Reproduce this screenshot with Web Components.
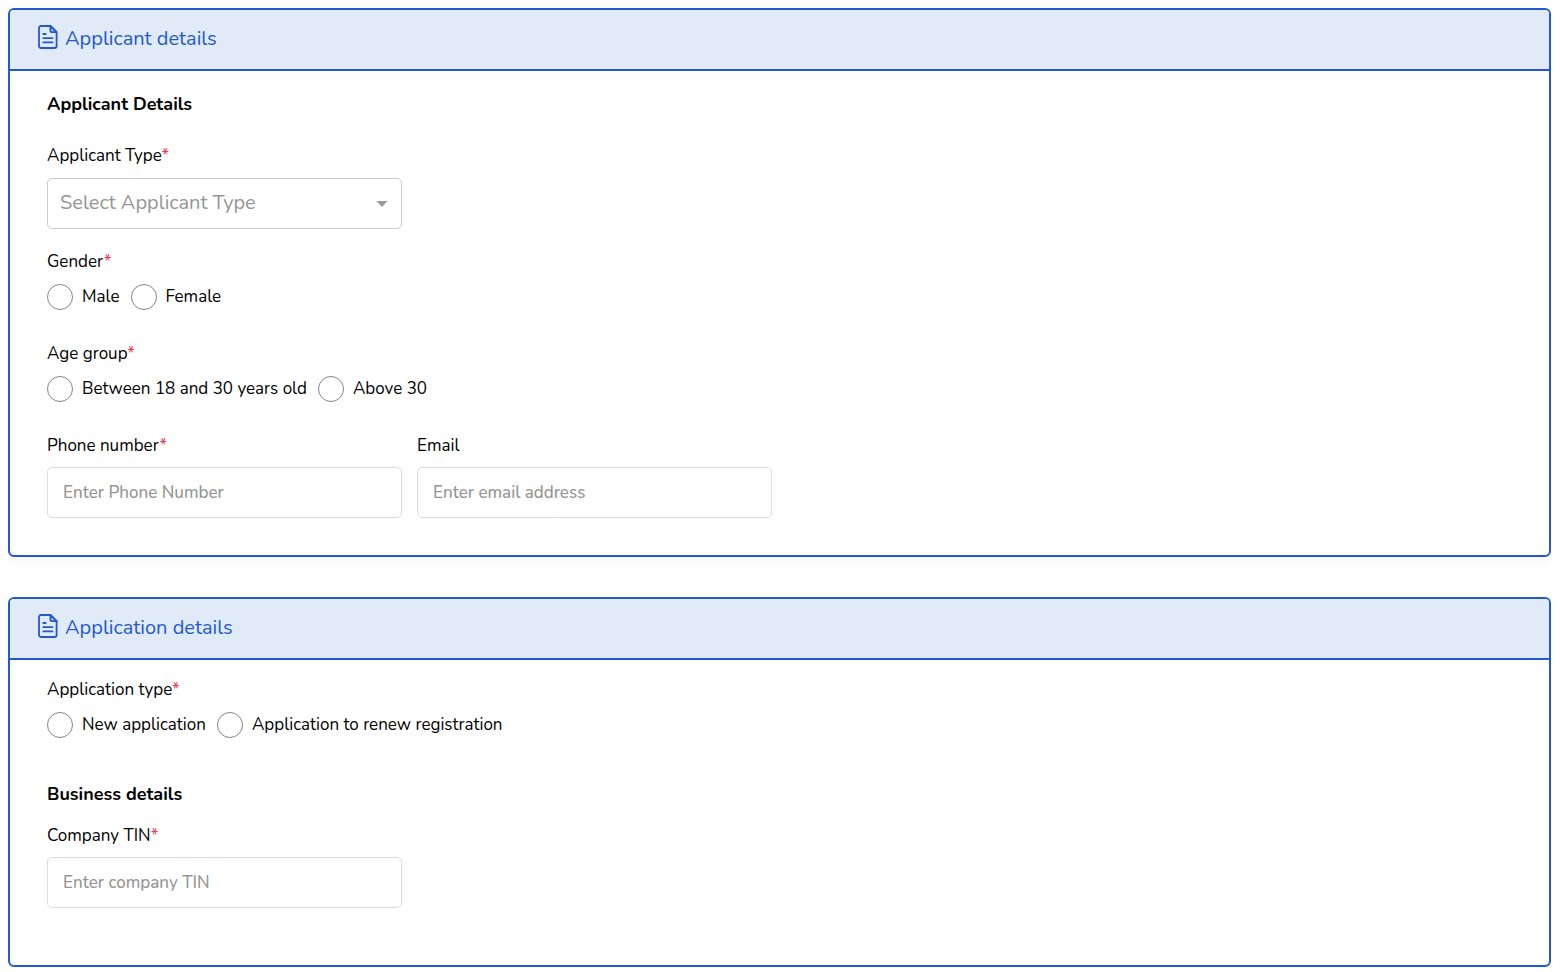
<!DOCTYPE html>
<html lang="en">
<head>
<meta charset="utf-8">
<meta name="viewport" content="width=device-width, initial-scale=1">
<title>Registration application</title>
<style>
  body {
    margin: 8px 9px 0 8px;
    background: #fff;
    color: #000;
    font: 17px/24px Nunito, Lato, sans-serif;
    --brand: #2459cd;
    --brand-soft: #e1ebf7;
    --muted: #959595;
  }
</style>
</head>
<body>
<application-form></application-form>

<script>
const define = (name, html, setup) => {
  const template = document.createElement('template');
  template.innerHTML = html;
  customElements.define(name, class extends HTMLElement {
    constructor() {
      super();
      this.attachShadow({ mode: 'open' }).append(template.content.cloneNode(true));
    }
    connectedCallback() {
      if (setup && !this.ready) setup(this, this.shadowRoot);
      this.ready = true;
    }
  });
};

const star = host => host.hasAttribute('required') ? '<span class="star">*</span>' : '';

define('document-icon', `
  <style>
    :host { display: block; width: 20px; height: 24px; color: inherit; }
    svg { display: block; }
  </style>
  <svg width="20" height="24" viewBox="0 0 20 24" fill="none" stroke="currentColor" stroke-width="1.8" stroke-linejoin="round" stroke-linecap="round" aria-hidden="true">
    <path d="M3 1h9.4L18.6 7.2V21a2 2 0 0 1-2 2H3a2 2 0 0 1-2-2V3a2 2 0 0 1 2-2z"/>
    <path d="M12.4 1v4.4a1.8 1.8 0 0 0 1.8 1.8h4.4z" fill="#b8cdf0"/>
    <path d="M5.3 9h2.4M5.3 13.2h9.2M5.3 17.4h9.2"/>
  </svg>`);

define('form-card', `
  <style>
    :host { display: block; border: 2px solid var(--brand); border-radius: 6px; background: #fff; box-shadow: 0 4px 14px rgba(0, 0, 0, .05); }
    header { display: flex; align-items: center; gap: 7px; box-sizing: border-box; min-height: 61px; padding: 0 28px 1px; border-bottom: 2px solid var(--brand); border-radius: 4px 4px 0 0; background: var(--brand-soft); color: var(--brand); }
    document-icon { padding-bottom: 4px; }
    h2 { margin: 0; font-size: 20px; line-height: 28px; font-weight: 400; }
    .body { padding: 0 37px; }
  </style>
  <header><document-icon></document-icon><h2></h2></header>
  <div class="body"><slot></slot></div>`,
  (host, root) => { root.querySelector('h2').textContent = host.getAttribute('heading'); });

define('text-field', `
  <style>
    :host { display: block; width: 355px; max-width: 100%; }
    label { display: block; margin-bottom: 9px; }
    .star { color: #f0384e; }
    input { display: block; box-sizing: border-box; width: 100%; height: 51px; padding: 0 15px; border: 1px solid #d9dde2; border-radius: 5px; background: #fff; color: inherit; font: inherit; font-weight: 500; }
    input::placeholder { color: var(--muted); opacity: 1; }
  </style>
  <label for="control"></label><input id="control">`,
  (host, root) => {
    root.querySelector('label').innerHTML = host.getAttribute('label') + star(host);
    const input = root.querySelector('input');
    input.type = host.getAttribute('type') || 'text';
    input.placeholder = host.getAttribute('placeholder');
    input.required = host.hasAttribute('required');
  });

define('select-field', `
  <style>
    :host { display: block; width: 355px; max-width: 100%; }
    label { display: block; margin-bottom: 10px; }
    .star { color: #f0384e; }
    .box { display: grid; align-items: center; }
    select, svg { grid-area: 1 / 1; }
    select { appearance: none; box-sizing: border-box; width: 100%; height: 51px; padding: 0 36px 2px 12px; border: 1px solid #ccc; border-radius: 5px; background: #fff; color: var(--muted); font: inherit; font-size: 20px; }
    svg { justify-self: end; margin-right: 14px; pointer-events: none; }
  </style>
  <label for="control"></label>
  <div class="box">
    <select id="control"><option></option><option>Individual</option><option>Company</option></select>
    <svg width="12" height="6" viewBox="0 0 12 6" aria-hidden="true"><path d="M.5 0h11L6 6z" fill="#999"/></svg>
  </div>`,
  (host, root) => {
    root.querySelector('label').innerHTML = host.getAttribute('label') + star(host);
    root.querySelector('option').textContent = host.getAttribute('placeholder');
  });

define('radio-group', `
  <style>
    :host { display: block; }
    fieldset { margin: 0; padding: 0; border: 0; min-width: 0; }
    legend { padding: 0; margin-bottom: 10px; }
    .star { color: #f0384e; }
    .options { display: flex; flex-wrap: wrap; gap: 11px; }
    label { display: flex; align-items: center; gap: 9px; }
    input { appearance: none; box-sizing: border-box; width: 26px; height: 26px; margin: 0; border: 1px solid #858585; border-radius: 50%; background: #fff; }
    input:checked { border: 8px solid var(--brand); }
  </style>
  <fieldset><legend></legend><div class="options"></div></fieldset>`,
  (host, root) => {
    root.querySelector('legend').innerHTML = host.getAttribute('label') + star(host);
    root.querySelector('.options').innerHTML = host.getAttribute('options').split('|')
      .map(text => `<label><input type="radio" name="choice" value="${text}"><span>${text}</span></label>`).join('');
  });

define('application-form', `
  <style>
    :host { display: block; }
    form { display: grid; gap: 40px; }
    h3 { margin: 0; font-size: 18px; line-height: 24px; font-weight: 700; color: #000; }
    .stack { display: flex; flex-direction: column; }
    .applicant { padding: 21px 0 37px; }
    .applicant h3 { margin-bottom: 28px; }
    .applicant select-field { margin-bottom: 21px; }
    .applicant radio-group { margin-bottom: 32px; }
    .row { display: flex; flex-wrap: wrap; gap: 15px; }
    .application { padding: 18px 0 57px; }
    .application radio-group { margin-bottom: 44px; }
    .application h3 { margin-bottom: 18px; }
  </style>
  <form>
    <form-card heading="Applicant details">
      <div class="stack applicant">
        <h3>Applicant Details</h3>
        <select-field label="Applicant Type" placeholder="Select Applicant Type" required></select-field>
        <radio-group label="Gender" options="Male|Female" required></radio-group>
        <radio-group label="Age group" options="Between 18 and 30 years old|Above 30" required></radio-group>
        <div class="row">
          <text-field label="Phone number" type="tel" placeholder="Enter Phone Number" required></text-field>
          <text-field label="Email" type="email" placeholder="Enter email address"></text-field>
        </div>
      </div>
    </form-card>
    <form-card heading="Application details">
      <div class="stack application">
        <radio-group label="Application type" options="New application|Application to renew registration" required></radio-group>
        <h3>Business details</h3>
        <text-field label="Company TIN" placeholder="Enter company TIN" required></text-field>
      </div>
    </form-card>
  </form>`);
</script>
</body>
</html>
